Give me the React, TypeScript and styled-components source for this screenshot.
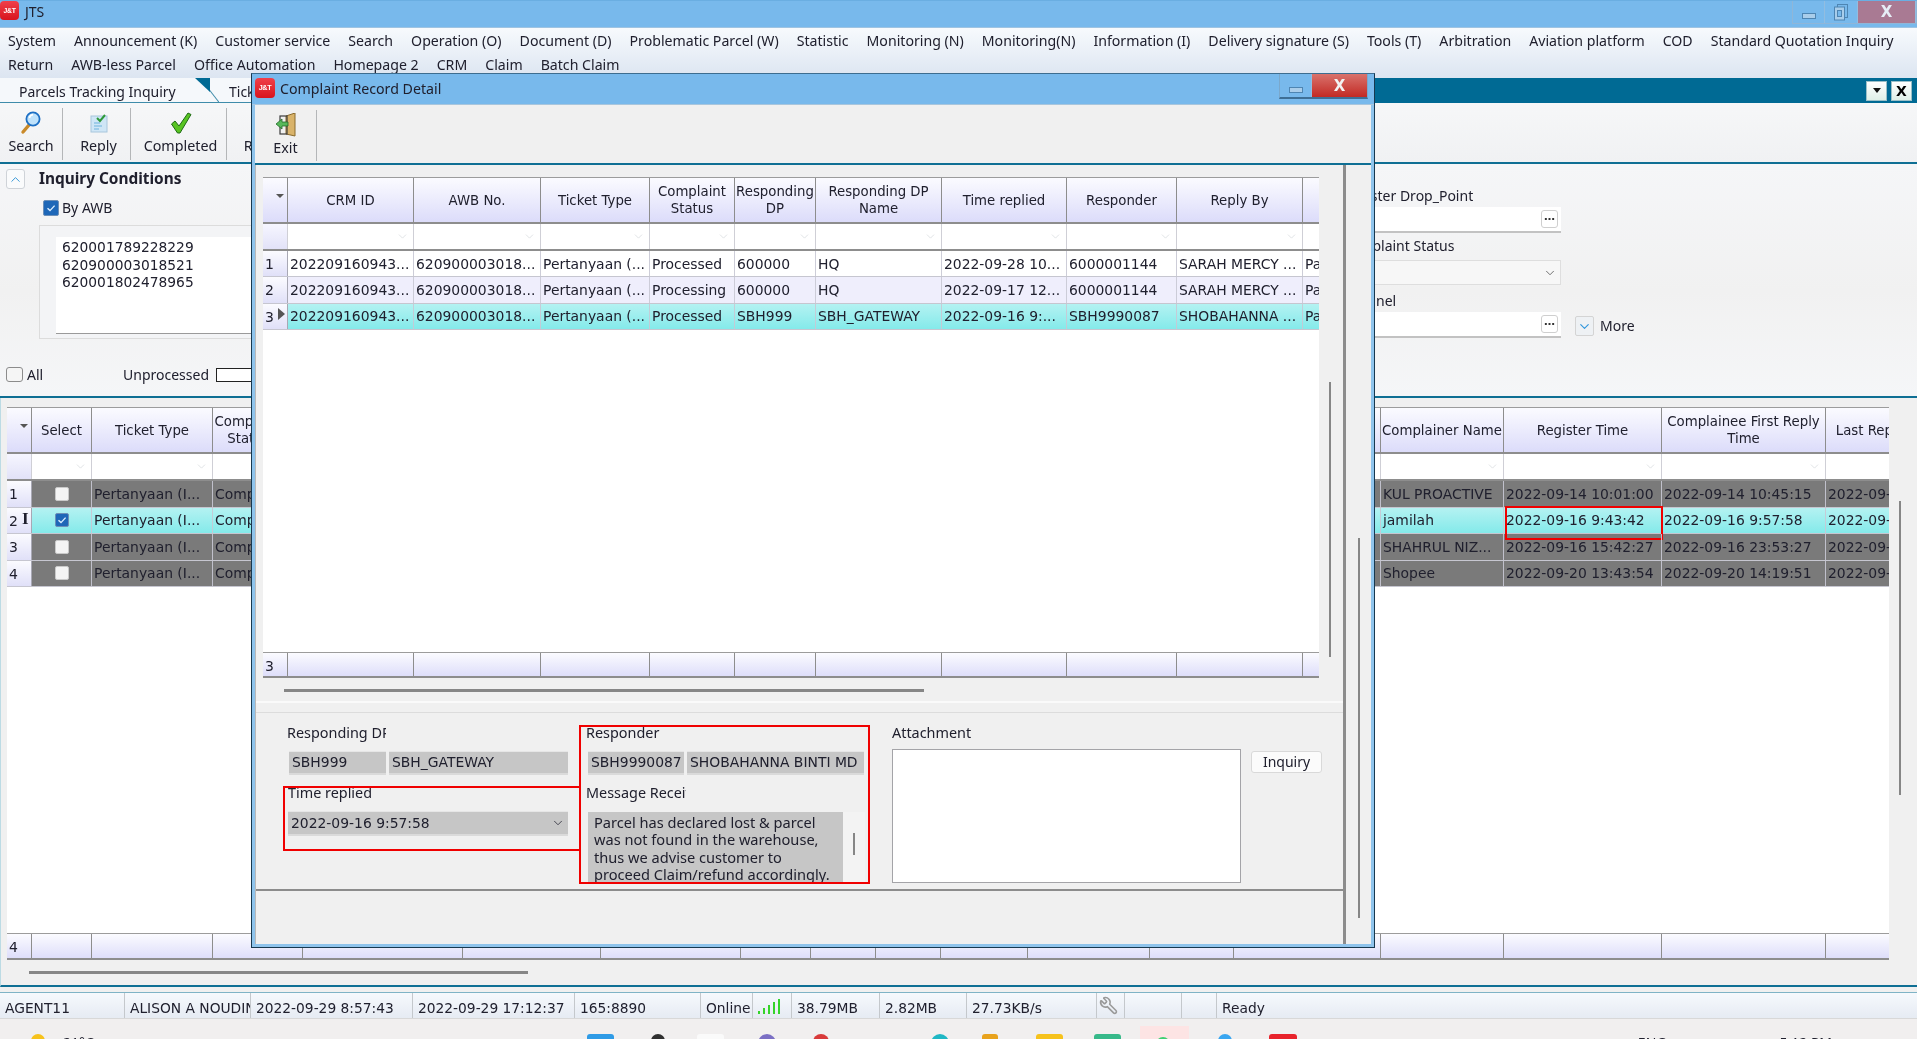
import React from "react";
import styled, { createGlobalStyle, css } from "styled-components";
import { ChevronDown, ChevronUp, Wrench } from "lucide-react";

const ui = `"Noto Sans", "Liberation Sans", sans-serif`;
const gridFont = `"DejaVu Sans", "Liberation Sans", sans-serif`;
const ink = "#20202e";

const Global = createGlobalStyle`
  html, body { margin: 0; padding: 0; width: 1917px; height: 1039px; overflow: hidden; background: #f0f0f0; }
  * { box-sizing: border-box; }
  #root { width: 1917px; height: 1039px; }
`;

const Screen = styled.div`
  position: relative;
  width: 1917px;
  height: 1039px;
  overflow: hidden;
  display: flex;
  flex-direction: column;
  font: 14px/20px ${ui};
  color: ${ink};
  filter: blur(0.35px);
`;

/* ---------- window chrome ---------- */
const TitleBar = styled.header`
  height: 28px;
  flex: none;
  display: flex;
  align-items: flex-start;
  background: #78b9ec;
  border-top: 1px solid #6aaee2;
  border-bottom: 1px solid #9fc4e2;
`;
const Logo = styled.span<{ $s: number }>`
  width: ${(p) => p.$s}px;
  height: ${(p) => p.$s}px;
  flex: none;
  border-radius: 4px;
  background: linear-gradient(#f0404a, #d8141e);
  color: #fff;
  font: bold ${(p) => p.$s * 0.36}px/${(p) => p.$s}px "Liberation Sans", sans-serif;
  text-align: center;
  letter-spacing: -0.3px;
`;
const AppName = styled.span`
  margin: 1px 0 0 6px;
  font-size: 14px;
`;
const WinControls = styled.div`
  margin-left: auto;
  height: 23px;
  display: flex;
  border: 1px solid #8fb6d8;
  border-top: 0;
`;
const WinButton = styled.button<{ $w: number; $close?: boolean }>`
  width: ${(p) => p.$w}px;
  padding: 0;
  border: 0;
  border-right: 1px solid #92bde0;
  background: ${(p) => (p.$close ? "#a97a93" : "#78b9ec")};
  color: #e6eef6;
  font: bold 15px/20px "DejaVu Sans", sans-serif;
  display: flex;
  align-items: center;
  justify-content: center;
`;
const MinGlyph = styled.span`
  width: 14px;
  height: 6px;
  margin-top: 8px;
  background: #a9cdea;
  border: 1px solid #4e85b2;
`;

const MenuBar = styled.nav`
  height: 50px;
  flex: none;
  padding: 3px 0 0 8px;
  background: linear-gradient(#f7fafd, #dce5f1);
  font-size: 14.15px;
`;
const MenuRow = styled.div`
  height: 24px;
  display: flex;
  gap: 18px;
  white-space: nowrap;
`;

const TabStrip = styled.div`
  height: 25px;
  flex: none;
  display: flex;
  background: #e2e9f3;
`;
const Tab = styled.div<{ $w: number; $pad: number }>`
  position: relative;
  width: ${(p) => p.$w}px;
  padding: 4px 0 0 ${(p) => p.$pad}px;
  background: #f5f8fb;
  border-bottom: 1px solid #3f8caa;
  white-space: nowrap;
  overflow: hidden;
  &::after {
    content: "";
    position: absolute;
    left: 195px;
    top: 0;
    width: 15px;
    height: 14px;
    background: #006a94;
    clip-path: polygon(0 0, 100% 0, 100% 100%);
  }
  &::before {
    content: "";
    position: absolute;
    left: 206px;
    top: 18px;
    width: 17px;
    height: 1px;
    background: #3f8caa;
    transform: rotate(52deg);
  }
`;
const PlainTab = styled(Tab)`
  &::after, &::before { display: none; }
`;
const TabFill = styled.div`
  flex: 1;
  background: #006a94;
  display: flex;
  justify-content: flex-end;
  align-items: center;
  gap: 4px;
  padding-right: 5px;
`;
const TabTool = styled.button`
  width: 21px;
  height: 20px;
  padding: 0;
  border: 1px solid #9cc0c8;
  background: linear-gradient(#fff, #dff0e8);
  color: #000;
  font: bold 14px/18px "DejaVu Sans", sans-serif;
  display: flex;
  align-items: center;
  justify-content: center;
`;
const CaretDown = styled.span`
  border-style: solid;
  border-width: 5px 4px 0;
  border-color: #111 transparent transparent;
`;

const Toolbar = styled.div<{ $h: number }>`
  height: ${(p) => p.$h}px;
  flex: none;
  display: flex;
  padding: 5px 0 2px;
  background: #f0f0f0;
  border-bottom: 2px solid #0f6f94;
`;
const MainToolbar = styled(Toolbar)`
  background: linear-gradient(#f6f7f8, #f0f1f3);
`;
const ToolButton = styled.div<{ $w: number; $pl?: number }>`
  width: ${(p) => p.$w}px;
  flex: none;
  padding-left: ${(p) => p.$pl ?? 0}px;
  display: flex;
  flex-direction: column;
  align-items: center;
  border-right: 1px solid #b4b6b8;
  white-space: nowrap;
  overflow: hidden;
`;
const ToolIcon = styled.svg`
  width: 22px;
  height: 24px;
  margin-top: 3px;
  flex: none;
`;
const ToolLabel = styled.span`
  margin-top: 1px;
  font-size: 14.3px;
`;

/* ---------- inquiry conditions ---------- */
const Conditions = styled.section`
  height: 234px;
  flex: none;
  display: flex;
  background: linear-gradient(#f5f6f8, #f1f1f1 55%, #f5f6f8);
  border-bottom: 2px solid #0f6f94;
`;
const ConditionsLeft = styled.div`
  width: 1342px;
  flex: none;
  padding: 5px 0 0 6px;
  overflow: hidden;
`;
const SectionHead = styled.div`
  height: 20px;
  display: flex;
  align-items: center;
  gap: 14px;
  font-weight: 700;
  font-size: 15.4px;
`;
const FoldButton = styled.span`
  width: 19px;
  height: 20px;
  flex: none;
  display: flex;
  align-items: center;
  justify-content: center;
  background: #fafbfc;
  border: 1px solid #cfd3d8;
  border-radius: 3px;
  color: #3a9ad8;
`;
const CheckRow = styled.div`
  height: 16px;
  margin: 11px 0 0 37px;
  display: flex;
  align-items: center;
  gap: 3px;
`;
const CheckBox = styled.span<{ $on?: boolean; $s?: number }>`
  width: ${(p) => p.$s ?? 16}px;
  height: ${(p) => p.$s ?? 16}px;
  flex: none;
  display: inline-flex;
  align-items: center;
  justify-content: center;
  border-radius: 2px;
  ${(p) =>
    p.$on
      ? css`
          background: #1e67b8;
          border: 1px solid #6c8fb8;
        `
      : css`
          background: #f4f4f4;
          border: 1px solid #c9c9c9;
        `}
`;
const Tick = () => (
  <svg width="10" height="10" viewBox="0 0 10 10">
    <path d="M1.5 5.2 4 7.6 8.6 2.6" fill="none" stroke="#dbeeff" strokeWidth="1.4" />
  </svg>
);
const AwbGroup = styled.div`
  width: 400px;
  height: 114px;
  margin: 9px 0 0 33px;
  padding: 11px 0 6px 16px;
  border: 1px solid #dcdcdc;
  background: #f3f4f6;
`;
const AwbBox = styled.div`
  height: 97px;
  padding: 2px 6px;
  background: #fff;
  border-bottom: 1px solid #9a9a9a;
  font-family: ${gridFont};
  font-size: 13.8px;
  line-height: 17.5px;
`;
const FilterLine = styled.div`
  height: 15px;
  margin-top: 28px;
  display: flex;
  align-items: center;
`;
const AllCheck = styled.span`
  width: 17px;
  height: 15px;
  flex: none;
  background: #f5f5f5;
  border: 1.5px solid #8c8c8c;
  border-radius: 3px;
`;
const AllLabel = styled.span`
  margin-left: 4px;
  width: 96px;
`;
const StatusSwatch = styled.span`
  width: 80px;
  height: 14px;
  margin-left: 7px;
  background: #fff;
  border: 1px solid #222;
`;
const FieldColumn = styled.div`
  width: 219px;
  flex: none;
  padding-top: 22px;
  display: flex;
  flex-direction: column;
`;
const FieldLabel = styled.label<{ $gap?: number }>`
  height: 20px;
  margin-top: ${(p) => p.$gap ?? 0}px;
  white-space: nowrap;
`;
const FieldInput = styled.div<{ $h: number; $gap?: number }>`
  height: ${(p) => p.$h}px;
  margin-top: ${(p) => p.$gap ?? 0}px;
  display: flex;
  align-items: center;
  justify-content: flex-end;
  padding-right: 3px;
  background: #fff;
  border-bottom: 2px solid #c2c2c2;
`;
const SelectInput = styled(FieldInput)`
  background: #f7f7f7;
  border: 1px solid #dedede;
  color: #555;
`;
const DotsButton = styled.span`
  width: 17px;
  height: 18px;
  background: #fff;
  border: 1px solid #cfcfcf;
  border-radius: 3px;
  font: bold 11px/12px "DejaVu Sans", sans-serif;
  text-align: center;
  color: #333;
`;
const MoreWrap = styled.div`
  margin: 152px 0 0 14px;
  height: 20px;
  display: flex;
  align-items: center;
  gap: 6px;
  font-size: 14px;
`;
const MoreButton = styled.span`
  width: 19px;
  height: 20px;
  display: flex;
  align-items: center;
  justify-content: center;
  background: #eef1f4;
  border: 1px solid #d4d4d4;
  border-radius: 2px;
  color: #2f96dc;
`;

/* ---------- data grid ---------- */
const GridBox = styled.div<{ $w: number }>`
  width: ${(p) => p.$w}px;
  flex: none;
  display: flex;
  flex-direction: column;
  background: #fff;
  overflow: hidden;
  font-family: ${gridFont};
`;
const HeadRow = styled.div`
  height: 47px;
  flex: none;
  display: flex;
  border-top: 1px solid #9c9c9c;
  border-bottom: 2px solid #8d8d8d;
`;
const HeadCell = styled.div<{ $w: number; $pr?: number }>`
  width: ${(p) => p.$w}px;
  flex: none;
  padding-right: ${(p) => p.$pr ?? 0}px;
  display: flex;
  align-items: center;
  justify-content: center;
  text-align: center;
  overflow: hidden;
  font-size: 13.3px;
  line-height: 17px;
  background: linear-gradient(#fbfbff, #dcdcfa);
  border-right: 1.5px solid #8d8d8d;
  &:last-child { border-right: 0; }
`;
const HeadText = styled.span`
  white-space: pre;
  flex: none;
`;
const SortCaret = styled.span`
  margin: -8px 0 0 10px;
  border-style: solid;
  border-width: 4px 4px 0;
  border-color: #555 transparent transparent;
`;
const FilterRowBox = styled.div`
  height: 27px;
  flex: none;
  display: flex;
  border-bottom: 2px solid #8d8d8d;
`;
const FilterCell = styled.div<{ $w: number; $head?: boolean }>`
  width: ${(p) => p.$w}px;
  flex: none;
  display: flex;
  justify-content: flex-end;
  align-items: center;
  padding-right: 4px;
  background: ${(p) => (p.$head ? "linear-gradient(#f6f6ff,#e2e2f8)" : "#fff")};
  border-right: 1px solid #cfcfd6;
  color: #cfd3d8;
  &:last-child { border-right: 0; }
`;
const DataRow = styled.div<{ $h: number; $tone: "plain" | "alt" | "sel" | "dark" }>`
  height: ${(p) => p.$h}px;
  flex: none;
  display: flex;
  border-bottom: 1.5px solid #c6c6d0;
  ${(p) =>
    ({
      plain: css`background: #fff;`,
      alt: css`background: #efeefc;`,
      sel: css`background: linear-gradient(#b4f2f2, #84eaea);`,
      dark: css`background: #7a7a7a;`,
    })[p.$tone]}
`;
const RowHead = styled.div<{ $w: number }>`
  position: relative;
  width: ${(p) => p.$w}px;
  flex: none;
  padding: 2px 0 0 2px;
  font-size: 14px;
  line-height: 22px;
  background: linear-gradient(#fbfbff, #e0e0f8);
  border-right: 1.5px solid #a8a8b4;
`;
const CurrentMark = styled.span`
  position: absolute;
  right: 2px;
  top: 4px;
  border-style: solid;
  border-width: 6px 0 6px 7px;
  border-color: transparent transparent transparent #555;
`;
const TextCursor = styled.span`
  position: absolute;
  left: 15px;
  top: 1px;
  font: bold 17px/20px "Liberation Serif", serif;
`;
const Cell = styled.div<{ $w: number; $mark?: boolean; $center?: boolean }>`
  position: relative;
  width: ${(p) => p.$w}px;
  flex: none;
  padding: 0 2px;
  display: flex;
  align-items: center;
  justify-content: ${(p) => (p.$center ? "center" : "flex-start")};
  overflow: hidden;
  white-space: nowrap;
  font-size: 13.9px;
  border-right: 1.5px solid rgba(200, 200, 212, 0.9);
  &:last-child { border-right: 0; }
  ${(p) =>
    p.$mark &&
    css`
      &::after {
        content: "";
        position: absolute;
        left: 1px;
        top: -2px;
        width: 154px;
        height: 30px;
        border: 2px solid #f00000;
      }
      overflow: visible;
    `}
`;
const FootRow = styled.div<{ $h: number }>`
  height: ${(p) => p.$h}px;
  flex: none;
  display: flex;
  margin-top: auto;
  border-top: 1.5px solid #9c9c9c;
  border-bottom: 2px solid #8d8d8d;
`;
const FootCell = styled.div<{ $w: number }>`
  width: ${(p) => p.$w}px;
  flex: none;
  padding: 3px 0 0 2px;
  font-size: 14px;
  background: linear-gradient(#fbfbff, #dedefa);
  border-right: 1.5px solid #8d8d8d;
  &:last-child { border-right: 0; }
`;
const Thumb = styled.div<{ $w?: number; $h?: number; $ml?: number; $mt?: number }>`
  flex: none;
  width: ${(p) => (p.$w ? `${p.$w}px` : "2px")};
  height: ${(p) => (p.$h ? `${p.$h}px` : "2px")};
  margin-left: ${(p) => p.$ml ?? 0}px;
  margin-top: ${(p) => p.$mt ?? 0}px;
  background: #868686;
`;

/* ---------- main grid panel ---------- */
const GridPanel = styled.section`
  height: 589px;
  flex: none;
  display: flex;
  flex-direction: column;
  padding: 9px 0 0 6px;
  background: #f0f0f0;
  border-bottom: 2px solid #0f6f94;
  border-left: 1px solid #bcdbe4;
`;
const GridArea = styled.div`
  height: 553px;
  flex: none;
  display: flex;
`;
const GutterColumn = styled.div<{ $w: number; $pt: number }>`
  width: ${(p) => p.$w}px;
  flex: none;
  padding-top: ${(p) => p.$pt}px;
`;
const PanelGap = styled.div`
  height: 6px;
  flex: none;
  background: #f0f0f0;
  border-bottom: 1px solid #7fb3c6;
`;

/* ---------- status bar and taskbar ---------- */
const StatusBar = styled.footer`
  height: 26px;
  flex: none;
  display: flex;
  background: linear-gradient(#f6f9fd, #e6ebf3);
  border-bottom: 1px solid #d8d8d8;
  font-family: ${gridFont};
  font-size: 13.8px;
`;
const StatusCell = styled.div<{ $w: number }>`
  width: ${(p) => p.$w}px;
  flex: none;
  padding: 5px 0 0 5px;
  overflow: hidden;
  white-space: nowrap;
  border-right: 1px solid #c4c8cc;
  display: flex;
`;
const StatusRest = styled.div`
  flex: 1;
  padding: 5px 0 0 5px;
`;
const SignalBars = styled.svg`
  width: 26px;
  height: 18px;
  margin: -1px 0 0 -1px;
`;
const WrenchHolder = styled.span`
  color: #9a9a9a;
  margin: -2px 0 0 -3px;
  transform: scaleX(-1);
`;
const Taskbar = styled.div`
  height: 20px;
  flex: none;
  display: flex;
  padding-top: 15px;
  background: #f1efef;
  overflow: hidden;
`;
const TrayIcon = styled.span<{ $ml: number; $w: number; $c: string; $round?: boolean }>`
  flex: none;
  margin-left: ${(p) => p.$ml}px;
  width: ${(p) => p.$w}px;
  height: ${(p) => p.$w}px;
  background: ${(p) => p.$c};
  border-radius: ${(p) => (p.$round ? "50%" : "3px")};
`;
const PinnedHighlight = styled.span`
  flex: none;
  margin: -8px 0 0 19px;
  width: 49px;
  height: 20px;
  padding: 11px 0 0 16px;
  background: #fde4e4;
`;
const TrayDot = styled.span`
  display: block;
  width: 14px;
  height: 14px;
  border-radius: 50%;
  background: #3fcf72;
`;
const TrayText = styled.span<{ $ml: number }>`
  flex: none;
  margin: 0 0 0 ${(p) => p.$ml}px;
  font-size: 14px;
  line-height: 18px;
  white-space: nowrap;
`;

/* ---------- modal ---------- */
const Modal = styled.div`
  position: absolute;
  left: 251px;
  top: 73px;
  width: 1124px;
  height: 875px;
  display: flex;
  flex-direction: column;
  padding: 0 3px 3px;
  background: #8fc4ec;
  border: 1px solid #17384f;
  border-top-color: #3d6d90;
`;
const ModalTitle = styled.div`
  height: 31px;
  flex: none;
  display: flex;
  align-items: flex-start;
  margin: 0 -3px;
  padding: 4px 0 0 3px;
  background: #78b9ec;
  border-bottom: 1px solid #a9c6dd;
`;
const ModalName = styled.span`
  margin: 1px 0 0 5px;
  font-size: 14.2px;
`;
const ModalControls = styled.div`
  margin: -4px 6px 0 auto;
  height: 25px;
  display: flex;
  border: 1px solid #7aa8cc;
  border-top: 0;
  border-bottom: 2px solid #3e6f96;
`;
const CloseRed = styled(WinButton)`
  background: linear-gradient(#d9726c, #c22a24);
  color: #f2f2f2;
  border-right: 0;
`;
const ModalBody = styled.div`
  flex: 1;
  min-height: 0;
  display: flex;
  background: #f0f0f0;
`;
const ModalMain = styled.div`
  width: 1091px;
  flex: none;
  display: flex;
  flex-direction: column;
  border-left: 1px solid #b9b9b9;
  border-right: 3px solid #8c8c8c;
`;
const ModalGridArea = styled.div`
  height: 501px;
  flex: none;
  margin-top: 12px;
  padding-left: 7px;
  display: flex;
`;
const ModalHScroll = styled.div`
  height: 23px;
  flex: none;
  padding-top: 11px;
`;
const StripGap = styled.div`
  height: 12px;
  flex: none;
  border-top: 2px solid #fafafa;
  border-bottom: 1px solid #dcdcdc;
`;
const DetailPanel = styled.div`
  height: 178px;
  flex: none;
  display: flex;
  padding: 10px 0 0 31px;
  border-bottom: 2px solid #8c8c8c;
  font-size: 14.4px;
`;
const DetailCol = styled.div<{ $w: number }>`
  width: ${(p) => p.$w}px;
  flex: none;
  display: flex;
  flex-direction: column;
`;
const DetailLabel = styled.label<{ $clip?: number; $gap?: number; $ml?: number }>`
  height: 20px;
  width: ${(p) => (p.$clip ? `${p.$clip}px` : "auto")};
  margin-top: ${(p) => p.$gap ?? 0}px;
  margin-left: ${(p) => p.$ml ?? 0}px;
  overflow: hidden;
  white-space: nowrap;
`;
const InputPair = styled.div`
  margin: 9px 0 0 2px;
  height: 23px;
  display: flex;
  gap: 3px;
`;
const ReadonlyField = styled.div<{ $w: number }>`
  width: ${(p) => p.$w}px;
  flex: none;
  padding: 0 3px;
  background: #c6c6c6;
  border-bottom: 2px solid #dadada;
  box-shadow: 0 -1px 0 #e6e6e6;
  font-family: ${gridFont};
  font-size: 13.9px;
  line-height: 21px;
  white-space: nowrap;
  overflow: hidden;
`;
const ReadonlySelect = styled(ReadonlyField)`
  margin: 9px 0 0 1px;
  height: 24px;
  display: flex;
  justify-content: space-between;
  align-items: center;
  color: ${ink};
`;
const MessageWrap = styled.div`
  margin: 9px 0 0 2px;
  height: 70px;
  display: flex;
`;
const MessageText = styled.div`
  width: 255px;
  flex: none;
  height: 70px;
  padding: 2px 6px;
  overflow: hidden;
  white-space: nowrap;
  background: #c6c6c6;
  font-size: 14.6px;
  line-height: 17.4px;
`;
const MessageScroll = styled.div`
  width: 22px;
  flex: none;
  padding: 21px 0 0 10px;
  background: #f3f3f3;
`;
const AttachBox = styled.div`
  margin-top: 6px;
  width: 349px;
  height: 134px;
  background: #fff;
  border: 1px solid #a4a4a8;
`;
const InquiryButton = styled.button`
  margin: 28px 0 0 10px;
  width: 71px;
  height: 22px;
  padding: 0;
  background: #fbfbfb;
  border: 1px solid #d9d9d9;
  border-radius: 3px;
  color: ${ink};
  font: 14px/20px ${ui};
`;
const ModalBottom = styled.div`
  flex: 1;
`;
const ModalRight = styled.div`
  flex: 1;
  display: flex;
  padding-left: 12px;
`;
const RightThumb = styled(Thumb)`
  align-self: flex-start;
  height: 380px;
  margin-top: 373px;
`;
const RedBox = styled.div<{ $l: number; $t: number; $w: number; $h: number }>`
  position: absolute;
  left: ${(p) => p.$l}px;
  top: ${(p) => p.$t}px;
  width: ${(p) => p.$w}px;
  height: ${(p) => p.$h}px;
  border: 2px solid #f00000;
  pointer-events: none;
`;

/* ---------- data ---------- */
const modalCols = [25, 126, 127, 109, 85, 81, 126, 125, 110, 126, 160];
const modalHeads = ["CRM ID", "AWB No.", "Ticket Type", "Complaint\nStatus", "Responding\nDP", "Responding DP\nName", "Time replied", "Responder", "Reply By", ""];
const reply = "Parcel has declared lost & parcel";
const modalRows: { tone: "plain" | "alt" | "sel"; cells: string[] }[] = [
  { tone: "plain", cells: ["202209160943...", "620900003018...", "Pertanyaan (...", "Processed", "600000", "HQ", "2022-09-28 10...", "6000001144", "SARAH MERCY ...", reply] },
  { tone: "alt", cells: ["202209160943...", "620900003018...", "Pertanyaan (...", "Processing", "600000", "HQ", "2022-09-17 12...", "6000001144", "SARAH MERCY ...", reply] },
  { tone: "sel", cells: ["202209160943...", "620900003018...", "Pertanyaan (...", "Processed", "SBH999", "SBH_GATEWAY", "2022-09-16 9:...", "SBH9990087", "SHOBAHANNA ...", reply] },
];

const mainCols = [25, 60, 121, 90, 160, 138, 140, 70, 65, 65, 87, 122, 84, 147, 123, 158, 164, 125];
const mainHeads: string[] = ["Select", "Ticket Type", "Complaint\nStatus", "", "", "", "", "", "", "", "", "", "", "Complainer Name", "Register Time", "Complainee First Reply\nTime", "Last Reply Time"];
const mainRows = [
  { tone: "dark" as const, on: false, name: "KUL PROACTIVE", reg: "2022-09-14 10:01:00", first: "2022-09-14 10:45:15", last: "2022-09-14 15:20:08" },
  { tone: "sel" as const, on: true, name: "jamilah", reg: "2022-09-16 9:43:42", first: "2022-09-16 9:57:58", last: "2022-09-28 10:11:37" },
  { tone: "dark" as const, on: false, name: "SHAHRUL NIZ...", reg: "2022-09-16 15:42:27", first: "2022-09-16 23:53:27", last: "2022-09-17 09:02:41" },
  { tone: "dark" as const, on: false, name: "Shopee", reg: "2022-09-20 13:43:54", first: "2022-09-20 14:19:51", last: "2022-09-21 11:36:20" },
];
const statusCells: [number, string][] = [
  [125, "AGENT11"],
  [126, "ALISON A NOUDIN"],
  [162, "2022-09-29 8:57:43"],
  [162, "2022-09-29 17:12:37"],
  [126, "165:8890"],
  [52, "Online"],
];
const menuOne = ["System", "Announcement (K)", "Customer service", "Search", "Operation (O)", "Document (D)", "Problematic Parcel (W)", "Statistic", "Monitoring (N)", "Monitoring(N)", "Information (I)", "Delivery signature (S)", "Tools (T)", "Arbitration", "Aviation platform", "COD", "Standard Quotation Inquiry"];
const menuTwo = ["Return", "AWB-less Parcel", "Office Automation", "Homepage 2", "CRM", "Claim", "Batch Claim"];

/* ---------- icons ---------- */
const SearchIcon = () => (
  <ToolIcon viewBox="0 0 22 24">
    <path d="M9 14 3 21" stroke="#c98a2a" strokeWidth="3.4" strokeLinecap="round" />
    <circle cx="13" cy="8" r="6.6" fill="#bfe2fb" stroke="#1d6fc4" strokeWidth="1.8" />
    <path d="M9.5 7a4 4 0 0 1 3.5-3.4" stroke="#fff" strokeWidth="1.6" fill="none" />
  </ToolIcon>
);
const ReplyIcon = () => (
  <ToolIcon viewBox="0 0 22 24">
    <rect x="3" y="5" width="16" height="16" fill="#cfe6f6" stroke="#a8c6dc" />
    <path d="M6 12h6M6 15h8M6 18h5" stroke="#6fb2dc" strokeWidth="1.2" />
    <path d="M9 7l3 3 5-6" fill="none" stroke="#2f9a3a" strokeWidth="2" />
  </ToolIcon>
);
const CheckIcon = () => (
  <ToolIcon viewBox="0 0 22 24">
    <path d="M1.5 13 5 10l4 5L18 2l3 1.5L10 22H7.5z" fill="#58c422" stroke="#1f6b14" strokeWidth="1" />
  </ToolIcon>
);
const ExitIcon = () => (
  <ToolIcon viewBox="0 0 22 24">
    <path d="M11 3 20 0v23l-9-2z" fill="#d9b36a" stroke="#8a6a2c" />
    <rect x="5" y="3" width="7" height="18" fill="none" stroke="#3d3d3d" strokeWidth="1.2" />
    <path d="M1 11l6-5v3h6v4H7v3z" fill="#57b85a" stroke="#236b2a" strokeWidth=".8" />
  </ToolIcon>
);
const Restore = () => (
  <svg width="16" height="18" viewBox="0 0 16 18">
    <rect x="4.5" y="1.5" width="10" height="13" fill="none" stroke="#4e85b2" />
    <rect x="1.5" y="4" width="10" height="13" fill="#a9cdea" stroke="#4e85b2" />
    <rect x="4.5" y="7.5" width="4" height="6" fill="#78b9ec" stroke="#4e85b2" />
  </svg>
);

const Chev = () => <ChevronDown size={13} strokeWidth={1.2} />;

export default function App() {
  return (
    <Screen>
      <Global />
      <TitleBar>
        <Logo $s={19}>J&amp;T</Logo>
        <AppName>JTS</AppName>
        <WinControls>
          <WinButton $w={32}><MinGlyph /></WinButton>
          <WinButton $w={33}><Restore /></WinButton>
          <WinButton $w={58} $close>X</WinButton>
        </WinControls>
      </TitleBar>
      <MenuBar>
        <MenuRow>{menuOne.map((m) => <span key={m}>{m}</span>)}</MenuRow>
        <MenuRow>{menuTwo.map((m) => <span key={m}>{m}</span>)}</MenuRow>
      </MenuBar>
      <TabStrip>
        <Tab $w={219} $pad={19}>Parcels Tracking Inquiry</Tab>
        <PlainTab $w={150} $pad={10}>Ticket Inquiry</PlainTab>
        <TabFill>
          <TabTool><CaretDown /></TabTool>
          <TabTool>X</TabTool>
        </TabFill>
      </TabStrip>
      <MainToolbar $h={61}>
        <ToolButton $w={63}><SearchIcon /><ToolLabel>Search</ToolLabel></ToolButton>
        <ToolButton $w={68} $pl={4}><ReplyIcon /><ToolLabel>Reply</ToolLabel></ToolButton>
        <ToolButton $w={96} $pl={4}><CheckIcon /><ToolLabel>Completed</ToolLabel></ToolButton>
        <ToolButton $w={80}><ToolIcon viewBox="0 0 22 24" /><ToolLabel>Return</ToolLabel></ToolButton>
      </MainToolbar>
      <Conditions>
        <ConditionsLeft>
          <SectionHead>
            <FoldButton><ChevronUp size={15} strokeWidth={1.6} /></FoldButton>
            Inquiry Conditions
          </SectionHead>
          <CheckRow>
            <CheckBox $on><Tick /></CheckBox>
            By AWB
          </CheckRow>
          <AwbGroup>
            <AwbBox>
              620001789228229<br />620900003018521<br />620001802478965
            </AwbBox>
          </AwbGroup>
          <FilterLine>
            <AllCheck />
            <AllLabel>All</AllLabel>
            <span>Unprocessed</span>
            <StatusSwatch />
          </FilterLine>
        </ConditionsLeft>
        <FieldColumn>
          <FieldLabel>Register Drop_Point</FieldLabel>
          <FieldInput $h={26} $gap={1}><DotsButton>…</DotsButton></FieldInput>
          <FieldLabel $gap={3}>Complaint Status</FieldLabel>
          <SelectInput $h={25} $gap={4}><ChevronDown size={14} strokeWidth={1.4} /></SelectInput>
          <FieldLabel $gap={6}>Channel</FieldLabel>
          <FieldInput $h={26} $gap={1}><DotsButton>…</DotsButton></FieldInput>
        </FieldColumn>
        <MoreWrap>
          <MoreButton><ChevronDown size={15} strokeWidth={1.8} /></MoreButton>
          More
        </MoreWrap>
      </Conditions>
      <GridPanel>
        <GridArea>
          <GridBox $w={1882}>
            <HeadRow>
              <HeadCell $w={mainCols[0]}><SortCaret /></HeadCell>
              {mainCols.slice(1).map((w, i) => (
                <HeadCell key={i} $w={w} $pr={i === 2 ? 18 : 0}><HeadText>{mainHeads[i] ?? ""}</HeadText></HeadCell>
              ))}
            </HeadRow>
            <FilterRowBox>
              <FilterCell $w={mainCols[0]} $head />
              {mainCols.slice(1).map((w, i) => (
                <FilterCell key={i} $w={w}>{i < 16 && <Chev />}</FilterCell>
              ))}
            </FilterRowBox>
            {mainRows.map((r, i) => (
              <DataRow key={i} $h={26.5} $tone={r.tone}>
                <RowHead $w={mainCols[0]}>
                  {i + 1}
                  {r.on && <TextCursor>I</TextCursor>}
                </RowHead>
                <Cell $w={mainCols[1]} $center>
                  <CheckBox $on={r.on} $s={14}>{r.on && <Tick />}</CheckBox>
                </Cell>
                <Cell $w={mainCols[2]}>Pertanyaan (I...</Cell>
                <Cell $w={mainCols[3]}>Completed</Cell>
                {mainCols.slice(4, 14).map((w, k) => <Cell key={k} $w={w} />)}
                <Cell $w={mainCols[14]}>{r.name}</Cell>
                <Cell $w={mainCols[15]} $mark={r.on}>{r.reg}</Cell>
                <Cell $w={mainCols[16]}>{r.first}</Cell>
                <Cell $w={mainCols[17]}>{r.last}</Cell>
              </DataRow>
            ))}
            <FootRow $h={27}>
              {mainCols.map((w, i) => <FootCell key={i} $w={w}>{i === 0 ? "4" : ""}</FootCell>)}
            </FootRow>
          </GridBox>
          <GutterColumn $w={22} $pt={94}>
            <Thumb $ml={10} $h={294} />
          </GutterColumn>
        </GridArea>
        <Thumb $w={499} $ml={22} $mt={11} $h={3} />
      </GridPanel>
      <PanelGap />
      <StatusBar>
        {statusCells.map(([w, t]) => <StatusCell key={t} $w={w}>{t}</StatusCell>)}
        <StatusCell $w={39}>
          <SignalBars viewBox="0 0 26 18">
            {[0, 1, 2, 3, 4].map((i) => (
              <rect key={i} x={i * 5 + 1} y={14 - i * 3} width="2" height={3 + i * 3} fill="#35d42a" />
            ))}
          </SignalBars>
        </StatusCell>
        <StatusCell $w={88}>38.79MB</StatusCell>
        <StatusCell $w={87}>2.82MB</StatusCell>
        <StatusCell $w={130}>27.73KB/s</StatusCell>
        <StatusCell $w={28}><WrenchHolder><Wrench size={19} strokeWidth={2} /></WrenchHolder></StatusCell>
        <StatusCell $w={57} />
        <StatusCell $w={35} />
        <StatusRest>Ready</StatusRest>
      </StatusBar>
      <Taskbar>
        <TrayIcon $ml={31} $w={14} $c="#f6c21c" $round />
        <TrayText $ml={18}>21°C</TrayText>
        <TrayIcon $ml={493} $w={27} $c="#2f9be6" />
        <TrayIcon $ml={37} $w={14} $c="#303030" $round />
        <TrayIcon $ml={32} $w={27} $c="#fafafa" />
        <TrayIcon $ml={34} $w={18} $c="#7b6fc4" $round />
        <TrayIcon $ml={37} $w={16} $c="#d83a3a" $round />
        <TrayIcon $ml={102} $w={18} $c="#1fb7c4" $round />
        <TrayIcon $ml={33} $w={16} $c="#e8a21c" />
        <TrayIcon $ml={38} $w={27} $c="#f6c21c" />
        <TrayIcon $ml={31} $w={27} $c="#37b98a" />
        <PinnedHighlight><TrayDot /></PinnedHighlight>
        <TrayIcon $ml={29} $w={14} $c="#3aa6f0" $round />
        <TrayIcon $ml={37} $w={28} $c="#e8232c" />
        <TrayText $ml={341}>ENG</TrayText>
        <TrayText $ml={113}>5:12 PM</TrayText>
      </Taskbar>

      <Modal>
        <ModalTitle>
          <Logo $s={20}>J&amp;T</Logo>
          <ModalName>Complaint Record Detail</ModalName>
          <ModalControls>
            <WinButton $w={32}><MinGlyph /></WinButton>
            <CloseRed $w={55}>X</CloseRed>
          </ModalControls>
        </ModalTitle>
        <Toolbar $h={60}>
          <ToolButton $w={62}><ExitIcon /><ToolLabel>Exit</ToolLabel></ToolButton>
        </Toolbar>
        <ModalBody>
          <ModalMain>
            <ModalGridArea>
              <GridBox $w={1056}>
                <HeadRow>
                  <HeadCell $w={modalCols[0]}><SortCaret /></HeadCell>
                  {modalCols.slice(1).map((w, i) => (
                    <HeadCell key={i} $w={w}><HeadText>{modalHeads[i]}</HeadText></HeadCell>
                  ))}
                </HeadRow>
                <FilterRowBox>
                  <FilterCell $w={modalCols[0]} $head />
                  {modalCols.slice(1).map((w, i) => (
                    <FilterCell key={i} $w={w}>{i < 9 && <Chev />}</FilterCell>
                  ))}
                </FilterRowBox>
                {modalRows.map((r, i) => (
                  <DataRow key={i} $h={26.3} $tone={r.tone}>
                    <RowHead $w={modalCols[0]}>
                      {i + 1}
                      {r.tone === "sel" && <CurrentMark />}
                    </RowHead>
                    {r.cells.map((c, k) => <Cell key={k} $w={modalCols[k + 1]}>{c}</Cell>)}
                  </DataRow>
                ))}
                <FootRow $h={26}>
                  {modalCols.map((w, i) => <FootCell key={i} $w={w}>{i === 0 ? "3" : ""}</FootCell>)}
                </FootRow>
              </GridBox>
              <GutterColumn $w={20} $pt={205}>
                <Thumb $ml={10} $h={275} />
              </GutterColumn>
            </ModalGridArea>
            <ModalHScroll><Thumb $w={640} $ml={28} $h={3} /></ModalHScroll>
            <StripGap />
            <DetailPanel>
              <DetailCol $w={299}>
                <DetailLabel $clip={99}>Responding DP</DetailLabel>
                <InputPair>
                  <ReadonlyField $w={97}>SBH999</ReadonlyField>
                  <ReadonlyField $w={179}>SBH_GATEWAY</ReadonlyField>
                </InputPair>
                <DetailLabel $gap={8} $ml={1}>Time replied</DetailLabel>
                <ReadonlySelect $w={280}>
                  2022-09-16 9:57:58
                  <ChevronDown size={14} strokeWidth={1.3} />
                </ReadonlySelect>
              </DetailCol>
              <DetailCol $w={306}>
                <DetailLabel>Responder</DetailLabel>
                <InputPair>
                  <ReadonlyField $w={96}>SBH9990087</ReadonlyField>
                  <ReadonlyField $w={177}>SHOBAHANNA BINTI MD</ReadonlyField>
                </InputPair>
                <DetailLabel $clip={100} $gap={8}>Message Received</DetailLabel>
                <MessageWrap>
                  <MessageText>
                    Parcel has declared lost &amp; parcel<br />
                    was not found in the warehouse,<br />
                    thus we advise customer to<br />
                    proceed Claim/refund accordingly.
                  </MessageText>
                  <MessageScroll><Thumb $h={22} /></MessageScroll>
                </MessageWrap>
              </DetailCol>
              <DetailCol $w={349}>
                <DetailLabel>Attachment</DetailLabel>
                <AttachBox />
              </DetailCol>
              <InquiryButton>Inquiry</InquiryButton>
            </DetailPanel>
            <ModalBottom />
          </ModalMain>
          <ModalRight>
            <RightThumb />
          </ModalRight>
        </ModalBody>
        <RedBox $l={31} $t={712} $w={298} $h={65} />
        <RedBox $l={327} $t={651} $w={291} $h={159} />
      </Modal>
    </Screen>
  );
}
